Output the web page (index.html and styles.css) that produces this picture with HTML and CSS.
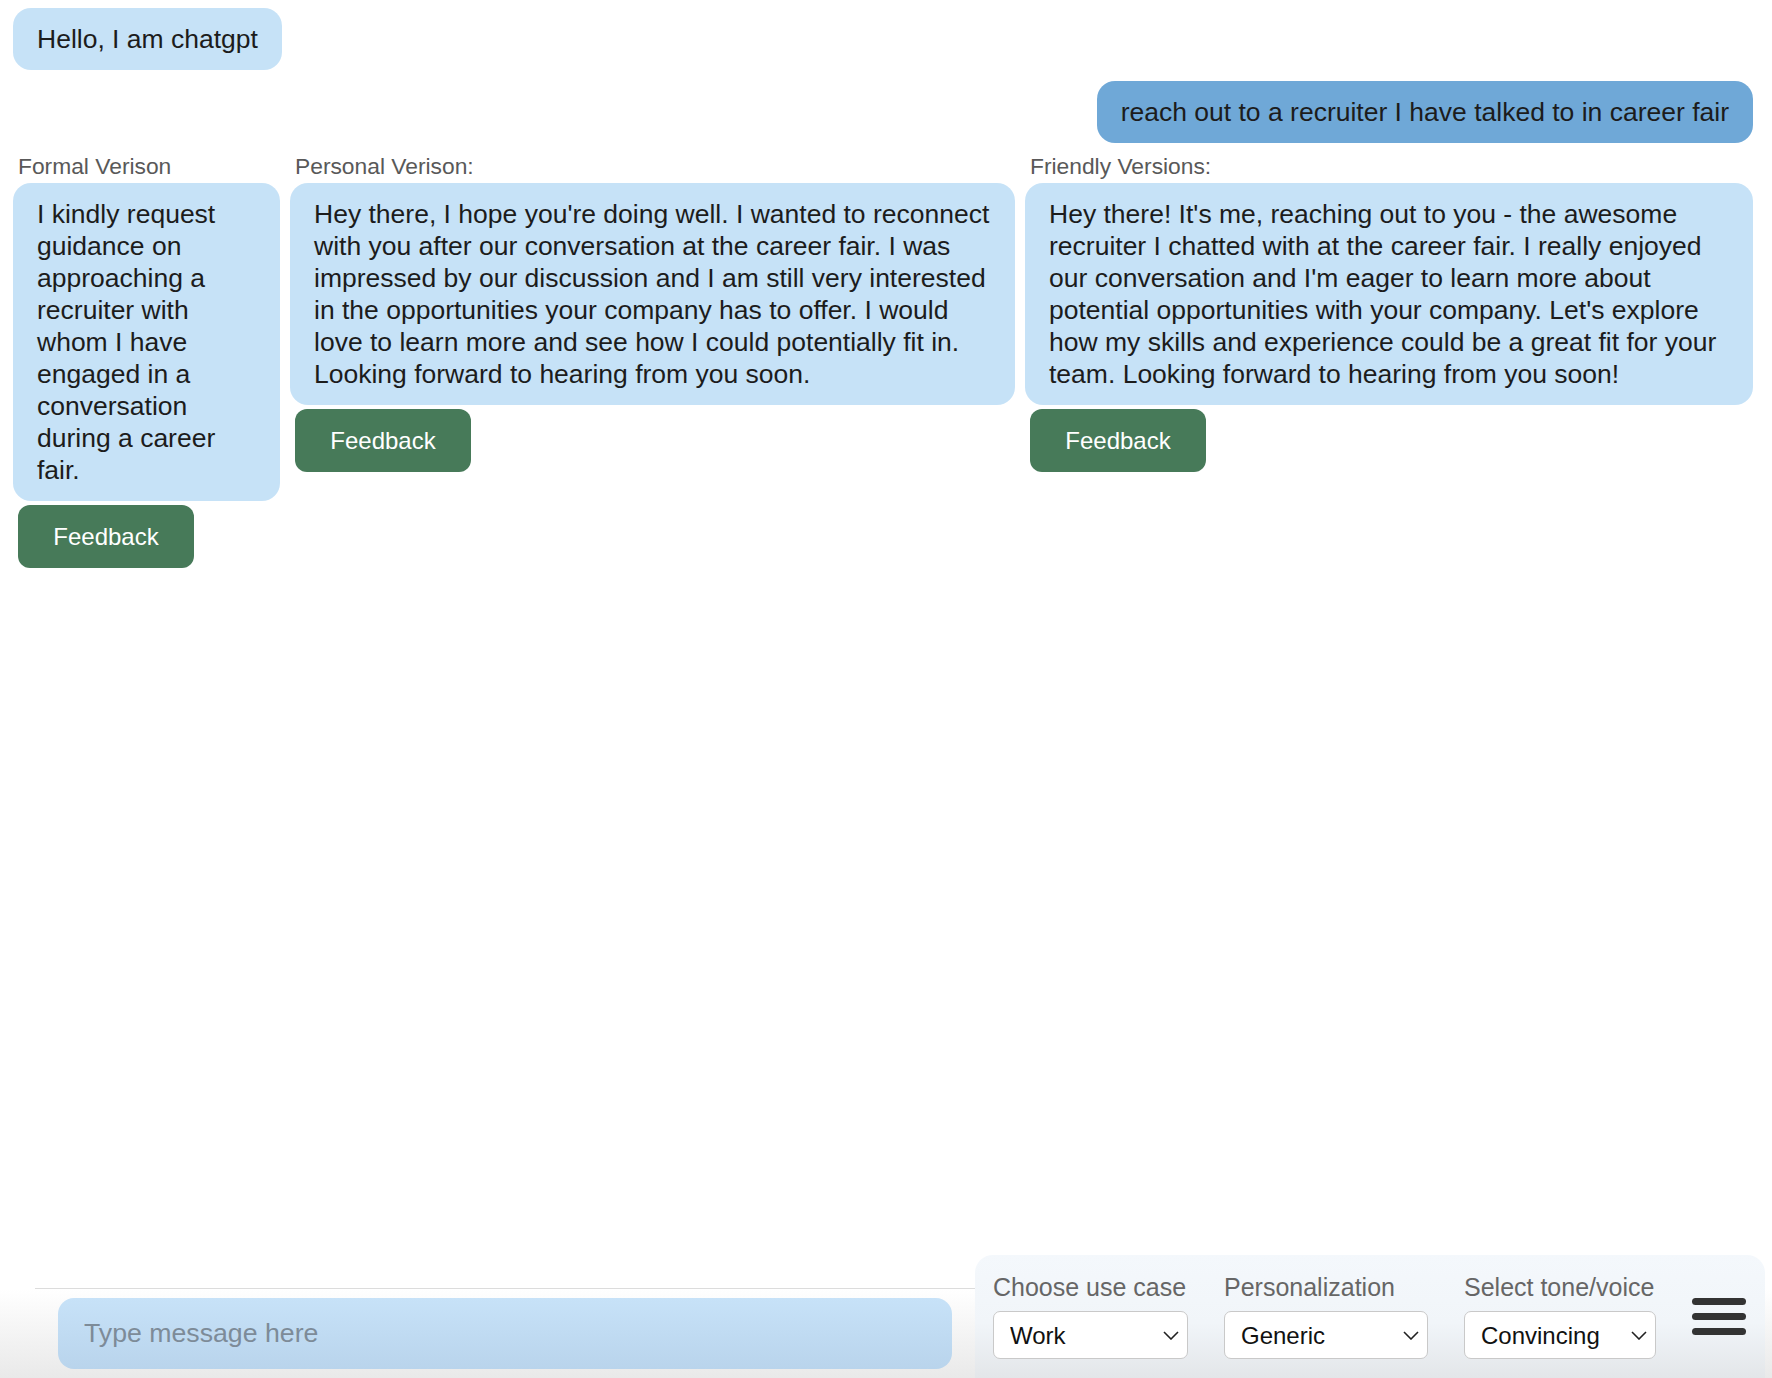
FILE: index.html
```html
<!DOCTYPE html>
<html lang="en">
<head>
<meta charset="utf-8">
<title>Chat</title>
<link rel="stylesheet" href="styles.css">
</head>
<body>
<main class="chat">
  <div class="bubble bot">Hello, I am chatgpt</div>
  <div class="user-row">
    <div class="bubble user">reach out to a recruiter I have talked to in career fair</div>
  </div>
  <div class="versions">
    <section class="version formal">
      <div class="v-label">Formal Verison</div>
      <div class="bubble reply">I kindly request guidance on approaching a recruiter with whom I have engaged in a conversation during a career fair.</div>
      <button class="feedback">Feedback</button>
    </section>
    <section class="version personal">
      <div class="v-label">Personal Verison:</div>
      <div class="bubble reply">Hey there, I hope you're doing well. I wanted to reconnect with you after our conversation at the career fair. I was impressed by our discussion and I am still very interested in the opportunities your company has to offer. I would love to learn more and see how I could potentially fit in. Looking forward to hearing from you soon.</div>
      <button class="feedback">Feedback</button>
    </section>
    <section class="version friendly">
      <div class="v-label">Friendly Versions:</div>
      <div class="bubble reply">Hey there! It's me, reaching out to you - the awesome recruiter I chatted with at the career fair. I really enjoyed our conversation and I'm eager to learn more about potential opportunities with your company. Let's explore how my skills and experience could be a great fit for your team. Looking forward to hearing from you soon!</div>
      <button class="feedback">Feedback</button>
    </section>
  </div>
</main>
<footer class="footer">
  <div class="composer">
    <div class="composer-inner">
      <input class="msg-input" type="text" placeholder="Type message here">
    </div>
  </div>
  <div class="panel">
    <div class="field f-use">
      <label class="f-label">Choose use case</label>
      <div class="select-wrap">
        <select class="sel"><option>Work</option></select>
        <svg class="chev" width="16" height="9" viewBox="0 0 16 9"><path d="M1 1 L8 8 L15 1" fill="none" stroke="#222" stroke-width="1.6"/></svg>
      </div>
    </div>
    <div class="field f-pers">
      <label class="f-label">Personalization</label>
      <div class="select-wrap">
        <select class="sel"><option>Generic</option></select>
        <svg class="chev" width="16" height="9" viewBox="0 0 16 9"><path d="M1 1 L8 8 L15 1" fill="none" stroke="#222" stroke-width="1.6"/></svg>
      </div>
    </div>
    <div class="field f-tone">
      <label class="f-label">Select tone/voice</label>
      <div class="select-wrap">
        <select class="sel"><option>Convincing</option></select>
        <svg class="chev" width="16" height="9" viewBox="0 0 16 9"><path d="M1 1 L8 8 L15 1" fill="none" stroke="#222" stroke-width="1.6"/></svg>
      </div>
    </div>
    <div class="hamburger"><span></span><span></span><span></span></div>
  </div>
</footer>
</body>
</html>
```

FILE: styles.css
```css
* { box-sizing: border-box; }
html, body { height: 100%; }
body {
  margin: 0;
  font-family: "Liberation Sans", Arial, sans-serif;
  color: #1c1c1c;
  background: #fff;
  display: flex;
  flex-direction: column;
  height: 100vh;
  overflow: hidden;
}
.chat {
  flex: 1;
  padding: 8px 19px 0 13px;
}
.bubble {
  background: #c6e2f7;
  border-radius: 18px;
  font-size: 26.5px;
  line-height: 32px;
  padding: 15px 24px;
  color: #1c1c1c;
}
.bot { display: inline-block; }
.user-row {
  display: flex;
  justify-content: flex-end;
  margin-top: 11px;
}
.user { background: #6fa8d7; }
.versions {
  display: flex;
  gap: 10px;
  margin-top: 11px;
  align-items: flex-start;
}
.version { display: flex; flex-direction: column; align-items: flex-start; min-width: 0; }
.formal { flex: 0 0 267px; }
.personal { flex: 725 1 0; }
.friendly { flex: 728 1 0; }
.v-label {
  font-size: 22.8px;
  line-height: 25px;
  color: #595959;
  margin: 0 0 4px 5px;
}
.reply { width: 100%; }
.feedback {
  margin: 4px 0 0 5px;
  width: 176px;
  height: 63px;
  border: none;
  border-radius: 12px;
  background: #477a59;
  color: #fff;
  font-family: "Liberation Sans", Arial, sans-serif;
  font-size: 24px;
}
.footer {
  display: flex;
  align-items: flex-end;
  background: linear-gradient(to bottom, #fff 0, #fff 34px, #e9e9e9 100%);
}
.composer { flex: 1; padding-left: 35px; }
.composer-inner {
  border-top: 1px solid #dcdcdc;
  padding: 9px 23px;
}
.msg-input {
  display: block;
  width: 100%;
  height: 71px;
  border: none;
  border-radius: 16px;
  background: linear-gradient(to bottom, #c7e2f8, #b9d4ec);
  padding: 0 26px;
  font-family: "Liberation Sans", Arial, sans-serif;
  font-size: 26.7px;
  color: #1c1c1c;
  outline: none;
}
.msg-input::placeholder { color: #7d8b98; }
.panel {
  flex: 0 0 790px;
  margin-right: 7px;
  height: 123px;
  border-radius: 18px 18px 0 0;
  background: linear-gradient(to bottom, #f4f8fc 0, #f1f5f9 55%, #e3e6e9 100%);
  display: flex;
  align-items: flex-start;
  gap: 36px;
  padding: 17px 0 0 18px;
}
.field { display: flex; flex-direction: column; }
.f-label {
  font-size: 25px;
  line-height: 30px;
  color: #666;
  white-space: nowrap;
  margin-bottom: 9px;
}
.f-use .select-wrap { width: 195px; }
.f-pers .select-wrap { width: 204px; }
.f-tone .select-wrap { width: 192px; }
.select-wrap { position: relative; }
.sel {
  -webkit-appearance: none;
  appearance: none;
  width: 100%;
  height: 48px;
  border: 1px solid #c9c9c9;
  border-radius: 7px;
  background: #fff;
  font-family: "Liberation Sans", Arial, sans-serif;
  font-size: 24px;
  color: #111;
  padding: 0 0 0 16px;
}
.chev {
  position: absolute;
  right: 9px;
  top: 20px;
  pointer-events: none;
}
.hamburger {
  width: 54px;
  margin-top: 26px;
  display: flex;
  flex-direction: column;
  gap: 8px;
}
.hamburger span {
  display: block;
  height: 7px;
  border-radius: 4px;
  background: #333;
}
```
